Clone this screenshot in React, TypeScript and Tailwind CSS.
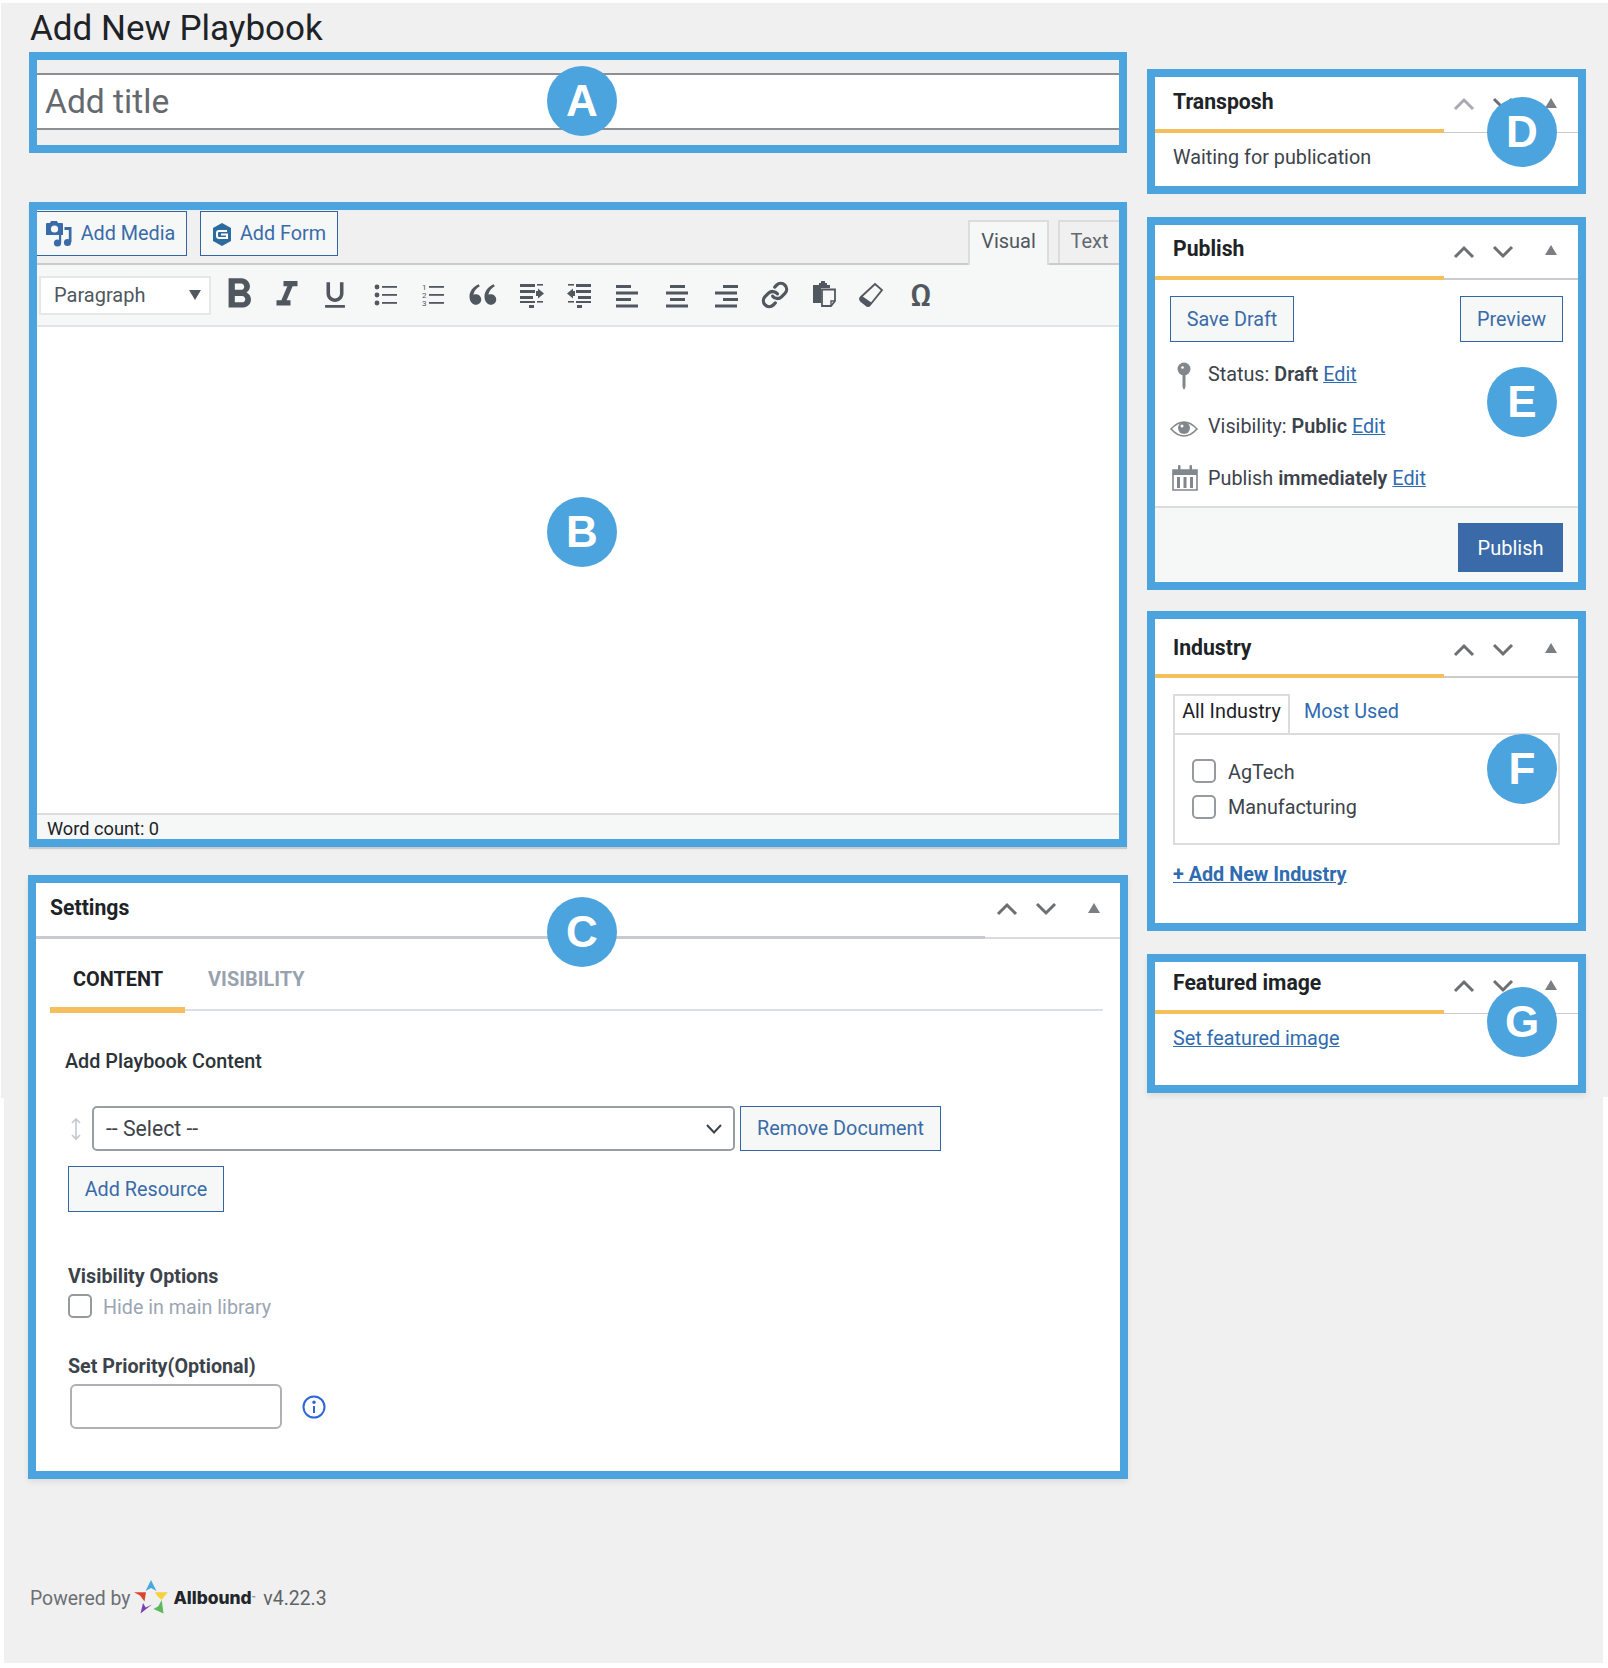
import React from "react";
import { MdFormatBold, MdFormatItalic, MdFormatUnderlined } from "react-icons/md";
import { RiDoubleQuotesL } from "react-icons/ri";
import { Link } from "lucide-react";

const Badge = ({ letter, className }: { letter: string; className: string }) => (
  <div className={`absolute z-10 flex h-[70px] w-[70px] items-center justify-center rounded-full bg-[#4ca4de] font-['Liberation_Sans',sans-serif] text-[44px] font-bold text-white ${className}`}>
    {letter}
  </div>
);

const Up = ({ light }: { light?: boolean }) => (
  <svg width="24" height="16" viewBox="0 0 24 16" fill="none" className={light ? "text-[#a9abae]" : "text-[#6d6f72]"}>
    <path d="M3 13 L12 4 L21 13" stroke="currentColor" strokeWidth="3" />
  </svg>
);
const Down = () => (
  <svg width="24" height="16" viewBox="0 0 24 16" fill="none" className="text-[#6d6f72]">
    <path d="M3 3 L12 12 L21 3" stroke="currentColor" strokeWidth="3" />
  </svg>
);
const Tri = () => (
  <svg width="24" height="12" viewBox="0 0 24 12" className="text-[#7b7e82]">
    <path d="M6 11 L12 1 L18 11 Z" fill="currentColor" />
  </svg>
);

const Arrows = ({ light, className }: { light?: boolean; className: string }) => (
  <div className={`ml-auto flex items-center pr-[15px] ${className}`}>
    <Up light={light} />
    <div className="ml-[15px]"><Down /></div>
    <div className="ml-6 -mt-[3px]"><Tri /></div>
  </div>
);

const SideHeader = ({ title, rowClass, arrowClass, light, lineClass }: { title: string; rowClass: string; arrowClass: string; light?: boolean; lineClass: string }) => (
  <>
    <div className={`flex pl-[18px] ${rowClass}`}>
      <div className="flex items-center text-[21.2px] font-bold text-[#1d2327]">{title}</div>
      <Arrows light={light} className={arrowClass} />
    </div>
    <div className="flex items-end">
      <div className="h-[4px] w-[289px] bg-[#f6bf5e]" />
      <div className={`flex-1 bg-[#c9cbce] ${lineClass}`} />
    </div>
  </>
);

const BlueBtn = ({ children, className }: { children: React.ReactNode; className: string }) => (
  <button className={`flex items-center justify-center border-[1.5px] border-[#3365a5] bg-[#f6f7f7] pt-px text-[19.8px] text-[#3a6ba8] ${className}`}>{children}</button>
);

const Check = () => <span className="block h-6 w-6 shrink-0 rounded-[5px] border-2 border-[#96999d] bg-white" />;

const Lines = ({ rows }: { rows: [number, number, number?][] }) => (
  <svg width="28" height="28" viewBox="0 0 28 28" className="text-[#50575e]">
    {rows.map(([x, w, y], i) => (
      <rect key={i} x={x} y={y ?? 5 + i * 7.5} width={w} height="3" fill="currentColor" />
    ))}
  </svg>
);

const iconColor = "text-[#50575e]";

const UlIcon = () => (
  <svg width="28" height="28" viewBox="0 0 28 28" className={iconColor} fill="currentColor">
    <circle cx="5" cy="6" r="2.4" /><circle cx="5" cy="14" r="2.4" /><circle cx="5" cy="22" r="2.4" />
    <rect x="10" y="5" width="15" height="1.8" /><rect x="10" y="13" width="15" height="1.8" /><rect x="10" y="21" width="15" height="1.8" />
  </svg>
);
const OlIcon = () => (
  <svg width="28" height="28" viewBox="0 0 28 28" className={iconColor} fill="currentColor">
    <text x="2" y="9" fontSize="8" fontFamily="Roboto, sans-serif">1</text>
    <text x="2" y="17" fontSize="8" fontFamily="Roboto, sans-serif">2</text>
    <text x="2" y="25" fontSize="8" fontFamily="Roboto, sans-serif">3</text>
    <rect x="9" y="5" width="15" height="1.8" /><rect x="9" y="13" width="15" height="1.8" /><rect x="9" y="21" width="15" height="1.8" />
  </svg>
);
const IndentIcon = () => (
  <svg width="28" height="28" viewBox="0 0 28 28" className={iconColor} fill="currentColor">
    <rect x="2" y="3" width="15" height="3" /><rect x="19" y="3" width="6" height="1.6" />
    <rect x="2" y="9" width="15" height="3" /><rect x="2" y="15" width="13" height="3" />
    <path d="M18 10 L20 10 L20 7.5 L26 12.5 L20 17.5 L20 15 L18 15 Z" />
    <rect x="2" y="20" width="15" height="2" /><rect x="19" y="20" width="6" height="1.6" />
    <rect x="11" y="24" width="5" height="3" />
  </svg>
);
const OutdentIcon = () => (
  <svg width="28" height="28" viewBox="0 0 28 28" className={iconColor} fill="currentColor">
    <rect x="11" y="3" width="15" height="3" /><rect x="3" y="3" width="6" height="1.6" />
    <rect x="11" y="9" width="15" height="3" /><rect x="13" y="15" width="13" height="3" />
    <path d="M10 10 L8 10 L8 7.5 L2 12.5 L8 17.5 L8 15 L10 15 Z" />
    <rect x="11" y="20" width="15" height="2" /><rect x="3" y="20" width="6" height="1.6" />
    <rect x="12" y="24" width="5" height="3" />
  </svg>
);
const PasteIcon = () => (
  <svg width="28" height="28" viewBox="0 0 28 28" className={`-mt-[2px] ${iconColor}`}>
    <path d="M3 5 H9 V3 H11 V1 H15 V3 H17 V5 H20 V8 H11 V23 H3 Z" fill="currentColor" />
    <path d="M12 9.5 H25 V21 L21 26 H12 Z" fill="#f6f7f7" stroke="currentColor" strokeWidth="1.8" />
    <path d="M21 25 V21 H25" fill="none" stroke="currentColor" strokeWidth="1.4" />
  </svg>
);
const EraserIcon = () => (
  <svg width="28" height="28" viewBox="0 0 28 28" className={iconColor}>
    <path d="M18 3 L25 9 L13 24 Q11 26 9 24 L4 20 Q2 18 4 16 Z" fill="none" stroke="currentColor" strokeWidth="1.8" />
    <path d="M5 15 L15 22 L12 25 Q11 26 9 24 L4 20 Q2 18 5 15 Z" fill="currentColor" />
  </svg>
);

const toolbar: { el: React.ReactNode; ml: string }[] = [
  { el: <MdFormatBold size={50} className="shrink-0" />, ml: "" },
  { el: <MdFormatItalic size={42} className="shrink-0" />, ml: "ml-5" },
  { el: <MdFormatUnderlined size={34} className="shrink-0" />, ml: "ml-5" },
  { el: <UlIcon />, ml: "ml-[23px]" },
  { el: <OlIcon />, ml: "ml-5" },
  { el: <RiDoubleQuotesL size={36} className="shrink-0" />, ml: "ml-[21px]" },
  { el: <IndentIcon />, ml: "ml-[21px]" },
  { el: <OutdentIcon />, ml: "ml-[19px]" },
  { el: <Lines rows={[[2, 15], [2, 22], [2, 15], [2, 22]].map((r, i) => [r[0], r[1], 4 + i * 6.5]) as [number, number, number][]} />, ml: "ml-[21px]" },
  { el: <Lines rows={[[7, 15], [3, 22], [7, 15], [3, 22]].map((r, i) => [r[0], r[1], 4 + i * 6.5]) as [number, number, number][]} />, ml: "ml-[21px]" },
  { el: <Lines rows={[[11, 15], [3, 22], [11, 15], [3, 22]].map((r, i) => [r[0], r[1], 4 + i * 6.5]) as [number, number, number][]} />, ml: "ml-[21px]" },
  { el: <Link size={28} strokeWidth={2.8} />, ml: "ml-[21px]" },
  { el: <PasteIcon />, ml: "ml-[21px]" },
  { el: <EraserIcon />, ml: "ml-[19px]" },
  { el: <span className="text-[32px] font-medium leading-none">Ω</span>, ml: "ml-[22px]" },
];

const MediaIcon = () => (
  <svg width="26" height="26" viewBox="0 0 26 26" fill="#3a6ba8" className="shrink-0">
    <path d="M0 3 Q0 2 1 2 H4 L5 0 H11 L12 2 H16 Q17 2 17 3 V14 H0 Z" />
    <circle cx="8.5" cy="8" r="3.6" fill="#f6f7f7" />
    <path d="M18.5 6 H25.5 V21 H22.8 V9 H18.5 Z" />
    <circle cx="21.5" cy="21.5" r="3.6" />
    <circle cx="11.5" cy="22" r="3.6" />
    <rect x="13" y="14" width="2.2" height="8" />
  </svg>
);
const FormIcon = () => (
  <svg width="20" height="23" viewBox="0 0 20 23" className="shrink-0">
    <path d="M10 0 L19 5 V18 L10 23 L1 18 V5 Z" fill="#2c6b9e" />
    <path d="M15 8 H7 Q5 8 5 10 V13 Q5 15 7 15 H15 V11.5 H9" fill="none" stroke="#fff" strokeWidth="2" />
  </svg>
);

const Star = () => (
  <svg width="34" height="34" viewBox="0 0 34 34" className="shrink-0">
    <path d="M17 0 L22.5 11 L17 8 L11.5 11 Z" fill="#4aa8e0" />
    <path d="M0 12.3 L12 12.3 L10.5 21.5 L6 15.5 Z" fill="#d9442f" />
    <path d="M21 12.3 L33.7 12.3 L27.5 20 L23 15.7 Z" fill="#f6d13d" />
    <path d="M27.7 20 L29.5 33.5 L19.5 29 L24.3 26.2 Z" fill="#5cb85c" />
    <path d="M6.5 33.5 L9 23 L11.7 27.5 L18 24.5 Z" fill="#7a3fb0" />
  </svg>
);

const Edit = ({ children }: { children: string }) => <a className="font-normal text-[#2f6bb0] underline">{children}</a>;

export default function App() {
  return (
    <div className="relative min-h-[1668px] w-[1608px] bg-white pt-[3px] font-[Roboto,sans-serif]">
      <div className="absolute left-px top-[3px] h-[1095px] w-[3px] bg-[#f0f0f0]" />
      <div className="absolute right-0 top-[3px] h-[1094px] w-[5px] bg-[#f0f0f0]" />
      <div className="ml-1 flex h-[1660px] w-[1599px] gap-[19px] bg-[#f0f0f0] pl-6">
        {/* left column */}
        <div className="w-[1100px]">
          <h1 className="ml-[2px] flex h-[49px] items-center pt-[3px] text-[35px] font-normal text-[#1d2327]">Add New Playbook</h1>

          <div className="relative ml-px h-[101px] w-[1098px] border-8 border-[#4ca4de] pt-[13px]">
            <Badge letter="A" className="left-[510px] top-[6px]" />
            <div className="flex h-[57px] items-center border-y-2 border-[#8c8f94] bg-white pl-2 pt-[2px] text-[33.6px] text-[#646970]">Add title</div>
          </div>

          <div className="relative ml-px mt-[49px] h-[645px] w-[1098px] border-8 border-[#4ca4de] bg-white shadow-[0_2px_1px_#c9cbce]">
            <Badge letter="B" className="left-[510px] top-[287px]" />
            <div className="flex h-[53px] bg-[#f0f0f0]">
              <BlueBtn className="mt-px h-[45px] w-[150px] gap-[9px] border-l-0 pr-[2px]"><MediaIcon />Add Media</BlueBtn>
              <BlueBtn className="ml-[13px] mt-px h-[45px] w-[138px] gap-2"><FormIcon />Add Form</BlueBtn>
              <div className="relative z-[1] ml-auto flex items-end text-[20px] text-[#50575e]">
                <div className="-mb-[2px] flex h-[45px] w-[81px] items-center justify-center border-2 border-b-0 border-[#dcdcde] bg-[#f6f7f7] pb-[6px]">Visual</div>
                <div className="ml-[9px] flex h-[43px] w-[61px] items-center justify-center border-2 border-b-0 border-r-0 border-[#dcdcde] pb-1 text-[#646970]">Text</div>
              </div>
            </div>
            <div className="flex h-[64px] items-center border-y-2 border-t-[#c9cbce] border-b-[#e2e4e7] bg-[#f6f7f7] pl-0.5">
              <div className="flex h-[39px] w-[172px] items-center justify-between border-2 border-[#e6e7e9] bg-white pl-[13px] pr-2 text-[20px] text-[#50575e]">
                Paragraph
                <svg width="12" height="10" viewBox="0 0 12 10"><path d="M0 0 H12 L6 10 Z" fill="#50575e" /></svg>
              </div>
              <div className="ml-[14px] flex items-center text-[#50575e]">
                {toolbar.map((t, i) => (
                  <div key={i} className={`flex h-8 w-7 items-center justify-center ${t.ml}`}>{t.el}</div>
                ))}
              </div>
            </div>
            <div className="h-[486px]" />
            <div className="h-[26px] border-t-2 border-[#dcdcde] bg-[#f6f7f7] pl-[10px] pt-[3px] text-[18.2px] leading-[21px] text-[#1d2327]">Word count: 0</div>
          </div>

          <div className="relative mt-7 h-[604px] w-[1100px] border-8 border-[#4ca4de] bg-white shadow-[0_3px_6px_rgba(0,0,0,0.08)]">
            <Badge letter="C" className="left-[511px] top-[14px]" />
            <div className="flex h-[53px] pl-[14px]">
              <div className="flex items-center pb-1 text-[21.2px] font-bold text-[#1d2327]">Settings</div>
              <Arrows className="-mr-px pb-px" />
            </div>
            <div className="flex items-end">
              <div className="h-[3px] w-[949px] bg-[#c9cbd0]" />
              <div className="h-[2px] flex-1 bg-[#d9dbde]" />
            </div>
            <div className="ml-[14px] w-[1053px]">
              <div className="flex h-[68px] items-center gap-[45px] pl-[23px] pt-[13px] text-[19.9px] font-bold">
                <span className="text-[#1d2327]">CONTENT</span>
                <span className="text-[#98a2ae]">VISIBILITY</span>
              </div>
              <div className="flex items-center">
                <div className="h-[6px] w-[135px] bg-[#f6bf5e]" />
                <div className="h-[2px] flex-1 bg-[#dcdfe3]" />
              </div>
            </div>
            <div className="ml-[29px] mt-[35px] h-7 text-[19.8px] font-medium leading-7 text-[#2c3338]">Add Playbook Content</div>
            <div className="ml-8 mt-[30px] flex h-[45px]">
              <div className="flex w-6 shrink-0 items-center pl-[2px] text-[#c4c9d0]">
                <svg width="12" height="24" viewBox="0 0 12 24" fill="none" stroke="currentColor" strokeWidth="1.6">
                  <path d="M6 2 V22 M2 6 L6 2 L10 6 M2 18 L6 22 L10 18" />
                </svg>
              </div>
              <div className="flex w-[643px] items-center justify-between rounded-[5px] border-2 border-[#9a9da1] pl-3 pr-[11px] text-[21.2px] text-[#3c434a]">
                -- Select --
                <svg width="16" height="10" viewBox="0 0 16 10" fill="none"><path d="M1 1 L8 8.5 L15 1" stroke="#3c434a" strokeWidth="2" /></svg>
              </div>
              <BlueBtn className="ml-[5px] w-[201px]">Remove Document</BlueBtn>
            </div>
            <BlueBtn className="ml-8 mt-[15px] h-[46px] w-[156px]">Add Resource</BlueBtn>
            <div className="ml-8 mt-[51px] h-7 text-[19.7px] font-bold leading-7 text-[#3c434a]">Visibility Options</div>
            <div className="ml-8 mt-[3px] flex h-6 items-center gap-[11px] text-[19.7px] text-[#9aa5b3]">
              <Check />
              <span className="pt-[3px]">Hide in main library</span>
            </div>
            <div className="ml-8 mt-[35px] h-7 text-[19.7px] font-bold leading-7 text-[#3c434a]">Set Priority(Optional)</div>
            <div className="ml-[34px] mt-[3px] flex items-center">
              <input className="h-[45px] w-[212px] rounded-[6px] border-2 border-[#aeb0b3] bg-white" />
              <svg width="24" height="24" viewBox="0 0 24 24" fill="none" stroke="#2f66d8" strokeWidth="2" className="ml-5">
                <circle cx="12" cy="12" r="10.5" />
                <path d="M12 11 V18" />
                <circle cx="12" cy="7.2" r="0.8" fill="#2f66d8" />
              </svg>
            </div>
          </div>

          <div className="ml-[2px] mt-[102px] flex h-[34px] items-center pt-px text-[19.4px] text-[#6b6f73]">
            <span>Powered by</span>
            <span className="-mt-[3px] ml-1"><Star /></span>
            <span className="ml-[5px] font-[Inter,sans-serif] text-[17.4px] font-extrabold text-[#22262a]">Allbound<sup className="text-[6px] font-normal">™</sup></span>
            <span className="ml-2 text-[#5f6367]">v4.22.3</span>
          </div>
        </div>

        {/* right column */}
        <div className="w-[439px] pt-[66px]">
          <div className="relative h-[125px] border-8 border-[#4ca4de] bg-white">
            <Badge letter="D" className="left-[332px] top-5" />
            <SideHeader title="Transposh" rowClass="h-[52px] pb-[2px]" arrowClass="pt-1" light lineClass="h-px" />
            <div className="pl-[18px] pt-[11px] text-[19.8px] leading-7 text-[#3c434a]">Waiting for publication</div>
          </div>

          <div className="relative mt-[23px] h-[373px] border-8 border-[#4ca4de] bg-white">
            <Badge letter="E" className="left-[332px] top-[142px]" />
            <SideHeader title="Publish" rowClass="h-[51px] pb-[3px]" arrowClass="pt-[5px]" lineClass="h-[2px]" />
            <div className="flex justify-between px-[15px] pt-4">
              <BlueBtn className="h-[46px] w-[124px]">Save Draft</BlueBtn>
              <BlueBtn className="h-[46px] w-[103px]">Preview</BlueBtn>
            </div>
            <div className="mt-[6px] pl-[15px] text-[19.8px] text-[#3c434a]">
              <div className="flex h-[52px] items-center">
                <span className="w-[38px] shrink-0">
                  <svg width="28" height="34" viewBox="0 0 28 34" className="mt-[6px]">
                    <circle cx="14" cy="9" r="6.5" fill="#82878c" />
                    <circle cx="12.5" cy="7.5" r="1.3" fill="#fff" />
                    <path d="M12.5 14 H15.5 V27 L14 30 L12.5 27 Z" fill="#82878c" />
                  </svg>
                </span>
                <span className="pt-[2px]">Status: <b className="font-semibold">Draft</b> <Edit>Edit</Edit></span>
              </div>
              <div className="flex h-[52px] items-center">
                <span className="w-[38px] shrink-0">
                  <svg width="28" height="18" viewBox="0 0 28 18" fill="none" className="mt-[6px]">
                    <path d="M1 9 Q14 -5 27 9 Q14 23 1 9 Z" stroke="#82878c" strokeWidth="1.6" />
                    <circle cx="14" cy="8" r="6" fill="#82878c" />
                    <circle cx="12" cy="6" r="1.5" fill="#fff" />
                  </svg>
                </span>
                <span className="pt-[2px]">Visibility: <b className="font-semibold">Public</b> <Edit>Edit</Edit></span>
              </div>
              <div className="flex h-[52px] items-center">
                <span className="w-[38px] shrink-0">
                  <svg width="26" height="26" viewBox="0 0 26 26" fill="none" className="ml-[2px]">
                    <path d="M1 5 H25 V25 H1 Z" stroke="#82878c" strokeWidth="1.6" />
                    <rect x="1" y="5" width="24" height="5" fill="#82878c" />
                    <rect x="6" y="0" width="2.5" height="7" rx="1" fill="#82878c" />
                    <rect x="17.5" y="0" width="2.5" height="7" rx="1" fill="#82878c" />
                    <rect x="5" y="12" width="3" height="11" fill="#82878c" />
                    <rect x="11.5" y="12" width="3" height="11" fill="#82878c" />
                    <rect x="18" y="12" width="3" height="11" fill="#82878c" />
                  </svg>
                </span>
                <span className="pt-[2px]">Publish <b className="font-semibold">immediately</b> <Edit>Edit</Edit></span>
              </div>
            </div>
            <div className="mt-[2px] flex h-[75px] justify-end border-t-2 border-[#dcdcde] bg-[#f6f7f7] pr-[15px] pt-[15px]">
              <button className="h-[49px] w-[105px] bg-[#3a6ba8] text-[20px] text-white">Publish</button>
            </div>
          </div>

          <div className="relative mt-[21px] h-[320px] border-8 border-[#4ca4de] bg-white">
            <Badge letter="F" className="left-[332px] top-[115px]" />
            <SideHeader title="Industry" rowClass="h-[55px] pt-[2px]" arrowClass="pt-1" lineClass="h-[2px]" />
            <div className="px-[18px] pt-4 text-[19.8px]">
              <div className="flex h-[39px]">
                <div className="flex w-[117px] items-center justify-center border-2 border-b-0 border-[#dcdcde] pb-[5px] text-[#1d2327]">All Industry</div>
                <div className="ml-[14px] flex items-center pb-[3px] text-[#2f6bb0]">Most Used</div>
              </div>
              <div className="h-[112px] border-2 border-[#dcdcde] pl-[17px] pt-6 text-[#3c434a]">
                <div className="flex h-6 items-center gap-3"><Check /><span className="pt-[3px]">AgTech</span></div>
                <div className="mt-3 flex h-6 items-center gap-3"><Check /><span className="pt-[2px]">Manufacturing</span></div>
              </div>
              <a className="mt-[18px] block h-6 font-bold leading-6 text-[#2f6bb0] underline">+ Add New Industry</a>
            </div>
          </div>

          <div className="relative mt-[23px] h-[139px] border-8 border-[#4ca4de] bg-white shadow-[0_3px_6px_rgba(0,0,0,0.08)]">
            <Badge letter="G" className="left-[332px] top-[25px]" />
            <SideHeader title="Featured image" rowClass="h-[48px] pb-[6px]" arrowClass="pt-[6px]" lineClass="h-px" />
            <a className="block pl-[18px] pt-[11px] text-[19.8px] leading-7 text-[#2f6bb0] underline">Set featured image</a>
          </div>
        </div>
      </div>
    </div>
  );
}
